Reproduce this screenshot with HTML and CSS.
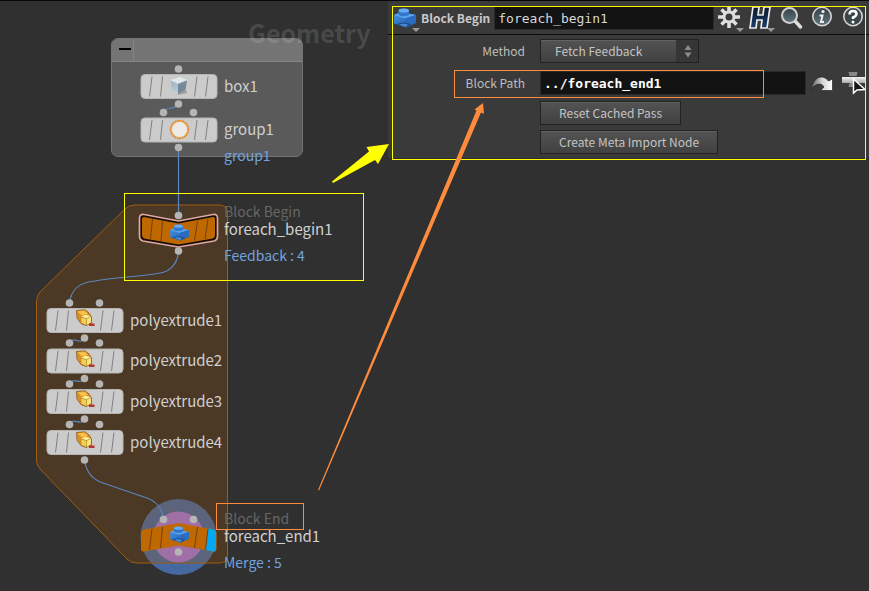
FILE: index.html
```html
<!DOCTYPE html>
<html lang="en">
<head>
<meta charset="utf-8">
<title>Geometry network</title>
<link rel="stylesheet" href="styles.css">
</head>
<body>
<svg class="defs" aria-hidden="true">
  <defs>
    <linearGradient id="blueFace" x1="0" y1="0" x2="1" y2="1"><stop offset="0" stop-color="#4b96e6"/><stop offset=".55" stop-color="#2b70c4"/><stop offset="1" stop-color="#1b4f96"/></linearGradient>
    <linearGradient id="steel" x1="0" y1="0" x2="0" y2="1"><stop offset="0" stop-color="#9fb0bd"/><stop offset="1" stop-color="#c3d0d9"/></linearGradient>
    <linearGradient id="metal" x1="0" y1="0" x2="0" y2="1"><stop offset="0" stop-color="#f2f2f2"/><stop offset="1" stop-color="#a9a9a9"/></linearGradient>
    <linearGradient id="navy" x1="0" y1="0" x2="0" y2="1"><stop offset="0" stop-color="#0a1526"/><stop offset="1" stop-color="#16406f"/></linearGradient>
    <linearGradient id="lens" x1="0" y1="0" x2="0" y2="1"><stop offset="0" stop-color="#354248"/><stop offset="1" stop-color="#62747c"/></linearGradient>
    <linearGradient id="sweep" x1="0" y1="0" x2="1" y2="0"><stop offset="0" stop-color="#555"/><stop offset=".5" stop-color="#d0d0d0"/><stop offset="1" stop-color="#fff"/></linearGradient>
    <symbol id="plate" viewBox="0 0 78 26">
      <rect x="1" y="1" width="76" height="24" rx="4" fill="#cbcbcb" stroke="#b5b5b5"/>
      <path d="M9.5 23 12 3M20.5 23 22.5 3M54.5 23 57 3M65.500 23 68 3" stroke="#808080" fill="none"/>
    </symbol>
    <symbol id="brick" viewBox="0 0 24 20">
      <path d="M1 7 8 4 23 7V15L13 19.500 1 15.500Z" fill="url(#blueFace)"/>
      <path d="M1 7 8 4 23 7 12 10.500Z" fill="#5ba4f0"/>
      <path d="M12 10.500 23 7V15L13 19.500Z" fill="#2b6cc0"/>
      <path d="M5.500 2.500Q10 -1 16 2V7Q10 9.500 5.500 7Z" fill="#2f76cc"/>
      <ellipse cx="10.800" cy="2.500" rx="5.200" ry="2" fill="#66acf4"/>
      <path d="M3 16.500Q10 12.500 19 16.500L13 19.500Z" fill="#20508f"/>
      <path d="M6 16.800Q11 14.500 15 17L12.500 19Z" fill="#4b8bd2"/>
    </symbol>
    <symbol id="cube" viewBox="0 0 20 20">
      <path d="M8 19 18 17 17 14Z" fill="#9c9c9c"/>
      <path d="M1.500 4 11 1 18 4 9 7.500Z" fill="#dfe8ec"/>
      <path d="M1.500 4 9 7.500V18.500L3 14Z" fill="url(#steel)"/>
      <path d="M9 7.500 18 4 16.500 14 9 18.500Z" fill="#768a99"/>
      <path d="M1.500 4 9 7.500 18 4" fill="none" stroke="#f0f4f5" stroke-width=".6"/>
    </symbol>
    <symbol id="extrude" viewBox="0 0 20 18">
      <path d="M1.500 1.500 10 .8 14 4 16.500 8V14L11 16.500 6 14.500 2 9Z" fill="#dc9224" stroke="#8b591a" stroke-width=".8"/>
      <path d="M2.500 2.500 9 1.500 13 4.500 7 6.500Z" fill="#f8c14c"/>
      <path d="M6 8 10.500 5.500 16 7.500 11.500 9.500Z" fill="#fff0a0"/>
      <path d="M6 8 11.500 9.500V16L6 13.500Z" fill="#f4d052"/>
      <path d="M11.500 9.500 16 7.500V13.500L11.500 16Z" fill="#fbe577"/>
      <path d="M6 8 11.500 9.500 16 7.500M11.500 9.500V16M6 8V13.500" fill="none" stroke="#a88030" stroke-width=".6"/>
      <path d="M14 15 16 13.500V14.500H19.500V17H14Z" fill="#b5342c"/>
    </symbol>
  </defs>
</svg>

<main class="workspace">
  <section class="network" aria-label="Network view">
    <h1 class="context">Geometry</h1>
    <div class="netbox"><div class="netbox-bar"><button class="collapse" type="button" aria-label="Collapse"></button></div></div>

    <svg class="wires" width="388" height="591" viewBox="0 0 388 591" aria-hidden="true">
      <circle cx="178.500" cy="537" r="38" fill="#4568a0"/>
      <path d="M135 205H219Q227.500 205 227.500 213V555Q227.500 563 219 563H137Q131 563 127 559L40 469Q36.500 465 36.500 461V302Q36.500 296 40 292L125 209Q129 205 135 205Z" fill="#aa5705" fill-opacity=".23" stroke="#a35b0c"/>
      <circle cx="178.500" cy="537" r="25.500" fill="#a06fa5"/>
      <g fill="none" stroke="#5b87bf" stroke-width="1.200">
        <path d="M178.500 104C177 110 165 106 163.500 112"/>
        <path d="M178.500 148V215"/>
        <path d="M178.500 251C178 263 170 272 160 273C140 277 115 277 95 281C80 282 71 290 69.500 303"/>
        <path d="M84.500 338C80 346 74 335 69.500 343M84.500 378.500C80 386 74 376 69.500 384M84.500 419C80 427 74 416 69.500 424.500"/>
        <path d="M84.500 460C86 471 91 479 103 483L147 498C158 502 162 509 163.500 519"/>
      </g>
      <path d="M144 214.500 178.500 221 213 214.500Q217.500 214 217.500 218V236Q217.500 240 214 241L178.500 247 143 241Q139.500 240 139.500 236V218Q139.500 214 144 214.500Z" fill="#160d05" stroke="#dfa8a5" stroke-width="1.700"/>
      <path d="M144 217 178.500 223.500 213 217Q215 217 215 219V235Q215 238 213 238.500L178.500 244.500 144 238.500Q142 238 142 235V219Q142 217 144 217Z" fill="#bf6800"/>
      <path d="M150.500 239 152.500 219M161 241 162.500 221M194.500 240.500 197.500 221M205 239 208 219" fill="none" stroke="#704012"/>
      <path d="M144 529.500 178.500 523 213 529.500Q216.500 530 216.500 533V549Q216.500 552 213 551.500L178.500 545.500 144 551.500Q141 552 141 549V533Q141 530 144 529.500Z" fill="#bf6800"/>
      <path d="M208 528.500 213 529.500Q216 530 216 533V549Q216 552 213 551.500L205.500 550Z" fill="#00a9f4"/>
      <path d="M149.500 550 152 528.500M160.500 548 162.500 527M194.500 548 197.500 527M205.500 550 208 529" fill="none" stroke="#704012"/>
      <g fill="#b5b5b5">
        <circle cx="178.500" cy="69" r="3.800"/><circle cx="178.500" cy="104" r="3.800"/><circle cx="163.500" cy="112.500" r="3.800"/><circle cx="193.500" cy="112.500" r="3.800"/><circle cx="178.500" cy="147.500" r="3.800"/>
        <circle cx="178.500" cy="215.500" r="3.800"/><circle cx="178.500" cy="251" r="3.800"/>
        <circle cx="69.500" cy="303" r="3.800"/><circle cx="99.500" cy="303" r="3.800"/>
        <circle cx="84.500" cy="338" r="3.800"/><circle cx="69.500" cy="343" r="3.800"/><circle cx="99.500" cy="343" r="3.800"/>
        <circle cx="84.500" cy="378.500" r="3.800"/><circle cx="69.500" cy="384" r="3.800"/><circle cx="99.500" cy="384" r="3.800"/>
        <circle cx="84.500" cy="419" r="3.800"/><circle cx="69.500" cy="424.500" r="3.800"/><circle cx="99.500" cy="424.500" r="3.800"/>
        <circle cx="84.500" cy="460" r="3.800"/>
        <circle cx="163.500" cy="519.500" r="3.800"/><circle cx="193.500" cy="519.500" r="3.800"/><circle cx="178.500" cy="552" r="3.800"/>
      </g>
      <use href="#plate" x="140" y="73.500" width="78" height="26"/><use href="#cube" x="169" y="76" width="20" height="20"/>
      <use href="#plate" x="140" y="117" width="78" height="26"/><circle cx="179.500" cy="129.500" r="8.500" fill="#ecebe8" stroke="#f0b56c" stroke-width="2"/><circle cx="179.500" cy="129.500" r="9" fill="none" stroke="#d2812a" stroke-width="1.400" stroke-dasharray="1.500 1"/>
      <use href="#plate" x="46" y="307.500" width="78" height="26"/><use href="#extrude" x="75" y="309" width="20" height="18"/>
      <use href="#plate" x="46" y="348" width="78" height="26"/><use href="#extrude" x="75" y="350" width="20" height="18"/>
      <use href="#plate" x="46" y="388.500" width="78" height="26"/><use href="#extrude" x="75" y="390" width="20" height="18"/>
      <use href="#plate" x="46" y="429.500" width="78" height="26"/><use href="#extrude" x="75" y="431" width="20" height="18"/>
      <use href="#brick" x="169" y="224" width="21" height="17"/>
      <use href="#brick" x="169" y="526" width="21" height="17"/>
    </svg>

    <div class="node n-box"><span class="name">box1</span></div>
    <div class="node n-group"><span class="name">group1</span><span class="tag">group1</span></div>
    <div class="node n-begin"><span class="type">Block Begin</span><span class="name">foreach_begin1</span><span class="tag">Feedback : 4</span></div>
    <div class="node n-poly1"><span class="name">polyextrude1</span></div>
    <div class="node n-poly2"><span class="name">polyextrude2</span></div>
    <div class="node n-poly3"><span class="name">polyextrude3</span></div>
    <div class="node n-poly4"><span class="name">polyextrude4</span></div>
    <div class="node n-end"><span class="type">Block End</span><span class="name">foreach_end1</span><span class="tag">Merge : 5</span></div>
    <div class="callout mark-begin"></div>
    <div class="callout mark-end"></div>
  </section>

  <section class="params" aria-label="Parameters">
    <header class="titlebar">
      <svg class="kind" width="28" height="28" viewBox="0 0 28 28" aria-hidden="true"><use href="#brick" x="0" y="4" width="24" height="20"/><path d="M19 24H27L23 28Z" fill="#999"/></svg>
      <label class="title" for="node-name">Block Begin</label>
      <input class="entry" id="node-name" type="text" value="foreach_begin1">
      <nav class="tools">
        <button type="button" aria-label="Settings"><svg width="30" height="28" viewBox="0 0 30 28"><g stroke="#dedede" stroke-width="3.600" stroke-linecap="butt"><path d="M13 2V9M13 17V24M2 13H9M17 13H24M5.500 5.500 10 10M16 16 20.500 20.500M5.500 20.500 10 16M16 10 20.500 5.500"/></g><circle cx="13" cy="13" r="5" fill="none" stroke="#dedede" stroke-width="3"/><path d="M20 24H28L24 28Z" fill="#999"/></svg></button>
        <button type="button" aria-label="Houdini"><svg width="30" height="28" viewBox="0 0 30 28"><path d="M6 3H12L11 11H16L17 3H23L20 24H14L15 16H10L9 24H3Z" fill="url(#navy)" stroke="#ececec" stroke-width="1.700"/><path d="M20 24H28L24 28Z" fill="#999"/></svg></button>
        <button type="button" aria-label="Search"><svg width="30" height="28" viewBox="0 0 30 28"><path d="M17 17 22.500 23" stroke="#ddd" stroke-width="3.500" stroke-linecap="round"/><circle cx="11.500" cy="11.500" r="7.500" fill="url(#lens)" stroke="#d0d0d0" stroke-width="2"/></svg></button>
        <button type="button" aria-label="Info"><svg width="30" height="28" viewBox="0 0 30 28"><circle cx="13" cy="12.500" r="9.200" fill="url(#lens)" stroke="#d5d5d5" stroke-width="1.600"/><circle cx="14" cy="7.500" r="1.600" fill="#eee"/><path d="M10.500 11.500H13.500L12 18H15" fill="none" stroke="#eee" stroke-width="2"/></svg></button>
        <button type="button" aria-label="Help"><svg width="30" height="28" viewBox="0 0 30 28"><circle cx="13" cy="12.500" r="9.200" fill="#3b464b" stroke="#d5d5d5" stroke-width="1.600"/><path d="M9.500 10.500Q9.500 7 13 7T16.500 10Q16.500 12 13 13.500V15" fill="none" stroke="#fff" stroke-width="2.500"/><circle cx="13" cy="18" r="1.500" fill="#fff"/></svg></button>
      </nav>
    </header>
    <form class="fields">
      <div class="row">
        <label for="method">Method</label>
        <span class="menu"><select id="method"><option>Fetch Feedback</option></select><svg class="steppers" width="22" height="22" viewBox="0 0 22 22" aria-hidden="true"><path d="M8.500 10 12 5 15.500 10ZM8.500 12.500H15.500L12 17.500Z" fill="#8c8c8c"/></svg></span>
      </div>
      <div class="row path-row">
        <label for="path">Block Path</label>
        <span class="path-entry"><input class="entry strong" id="path" type="text" value="../foreach_end1">
        <button type="button" aria-label="Jump to node"><svg width="26" height="24" viewBox="0 0 26 24"><path d="M1 18C4 5 13 3 18.500 10L22.500 8V19.500H10.500L14 16C11 11 6 13 1 18Z" fill="url(#sweep)" stroke="#252525" stroke-width=".7"/></svg></button>
        <button type="button" aria-label="Choose node"><svg width="26" height="24" viewBox="0 0 26 24"><path d="M8.500 1H17.500L16.500 5H9.500ZM9.500 12H16.500L17.500 16H8.500Z" fill="#888"/><rect x="2" y="6" width="23" height="6" fill="url(#metal)"/><path d="M13.500 8V22L17 19 25 18.500Z" fill="#161616" stroke="#fff" stroke-width="1.500"/></svg></button></span>
      </div>
      <div class="row"><button class="push" type="button">Reset Cached Pass</button></div>
      <div class="row"><button class="push" type="button">Create Meta Import Node</button></div>
    </form>
    <div class="callout mark-params"></div>
    <div class="callout mark-path"></div>
  </section>

  <svg class="arrows" width="869" height="591" viewBox="0 0 869 591" aria-hidden="true">
    <path d="M332 181.500 369 151.500 366.500 147 389 144 378 164 375 160 333 183Z" fill="#ff0"/>
    <path d="M318 490 476.500 110.500 474.500 109.500 483 103 484 114 481 112.500 319 490.500Z" fill="#ff8c3c"/>
  </svg>
</main>
</body>
</html>
```
FILE: styles.css
```css
* { box-sizing: border-box; }

body {
  margin: 0;
  background: #303030;
  color: #ccc;
  font: 12px/20px "Noto Sans CJK SC", "Noto Sans", sans-serif;
}

button, select, input { font: inherit; color: inherit; }
button { padding: 0; border: 0; background: none; }
svg { display: block; }
.defs { position: absolute; width: 0; height: 0; }

.workspace {
  position: relative;
  display: grid;
  grid-template-columns: 388px minmax(0, 1fr);
  align-items: start;
  min-height: 100vh;
  border-top: 1px solid #080808;
}

/* Network canvas */
.network { position: relative; align-self: stretch; margin-top: -1px; }

.context {
  position: absolute;
  left: 248px;
  top: 16px;
  margin: 0;
  z-index: 1;
  color: rgba(255, 255, 255, .13);
  font-size: 25px;
  line-height: 32px;
}

.netbox {
  position: absolute;
  left: 111px;
  top: 38px;
  width: 192px;
  height: 119px;
  overflow: hidden;
  border: 1px solid #737373;
  border-radius: 7px;
  background: #5a5a5a;
}
.netbox-bar {
  display: flex;
  height: 23px;
  border-bottom: 1px solid #858585;
  background: #747474;
}
.collapse { width: 22px; border-right: 1px solid #858585; }
.collapse::before {
  content: "";
  display: block;
  width: 12px;
  height: 2px;
  margin: 0 auto 2px 7px;
  background: #000;
}

.wires { position: absolute; left: 0; top: 0; }

.node { position: absolute; display: grid; white-space: nowrap; }
.name { font-size: 15px; line-height: 20px; color: #d0d0d0; }
.type { font-size: 14px; line-height: 16px; color: #666; }
.tag { margin-top: 8px; font-size: 14px; line-height: 16px; color: #72a3df; }
.n-box { left: 224px; top: 76px; }
.n-group { left: 224px; top: 119px; }
.n-begin { left: 224px; top: 203px; }
.n-poly1 { left: 130px; top: 310px; }
.n-poly2 { left: 130px; top: 350px; }
.n-poly3 { left: 130px; top: 391px; }
.n-poly4 { left: 130px; top: 432px; }
.n-end { left: 224px; top: 510px; }

/* Parameter pane */
.params {
  position: relative;
  padding: 1px 0 4px;
  background: #3a3a3a;
}
.titlebar {
  display: flex;
  align-items: center;
  height: 33px;
  padding-left: 5px;
  border-bottom: 1px solid #0c0c0c;
}
.kind { flex: none; }
.title { flex: none; font-weight: 700; color: #c8c8c8; }
.entry {
  min-width: 0;
  height: 24px;
  padding: 0 3px;
  border: 1px solid #292929;
  border-radius: 0;
  background: #131313;
  color: #d8d8d8;
  font: 13px/20px "DejaVu Sans Mono", monospace;
}
.titlebar .entry { flex: 1; margin-left: 4px; }
.strong { color: #fff; font-weight: 700; }
.tools { display: flex; flex: none; margin: 0 -2px 0 2px; }
.tools button { width: 31px; }

.fields { display: grid; gap: 5px; padding-top: 4px; }
.row {
  display: grid;
  grid-template-columns: 137px minmax(0, 1fr);
  column-gap: 15px;
  align-items: center;
}
.row label { text-align: right; color: #bdbdbd; }
.row .push { grid-column: 2; justify-self: start; }

.menu { position: relative; justify-self: start; }
.menu select, .push {
  height: 24px;
  border: 1px solid #222;
  background: linear-gradient(#535353, #414141);
  box-shadow: inset 0 1px #626262;
  color: #c3c3c3;
}
.menu select { display: block; width: 159px; padding: 0 32px 0 14px; appearance: none; border-radius: 0; }
.steppers { position: absolute; right: 1px; top: 1px; background: #363636; pointer-events: none; }
.path-row { padding: 3px 0 1px; }
.path-entry { display: flex; align-items: center; gap: 4px; padding-right: 3px; }
.path-entry .entry { flex: 1; }
.path-entry button { flex: none; }
.push { padding: 0 18px; }

/* Annotations */
.callout { position: absolute; z-index: 2; pointer-events: none; border: 1px solid #ff0; }
.mark-begin { left: 124px; top: 193px; width: 240px; height: 88px; }
.mark-end { left: 216px; top: 503px; width: 88px; height: 27px; border-color: #ff8c3c; }
.mark-params { left: 4px; right: 3px; top: 5px; bottom: -2px; }
.mark-path { left: 66px; top: 69px; right: 105px; height: 28px; border-color: #ff8c3c; }
.arrows { position: absolute; left: 0; top: -1px; z-index: 3; pointer-events: none; }
```
